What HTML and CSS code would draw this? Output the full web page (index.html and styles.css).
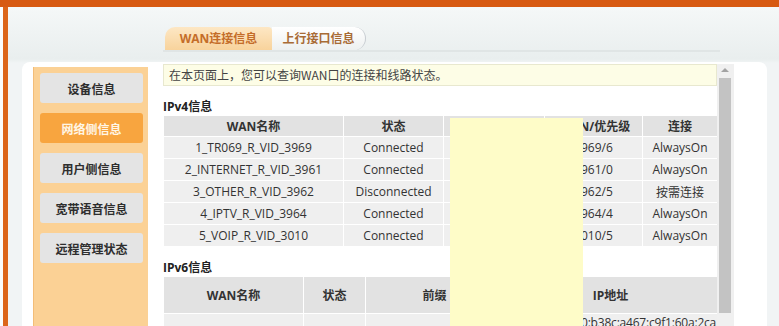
FILE: index.html
```html
<!DOCTYPE html>
<html lang="zh-CN">
<head>
<meta charset="utf-8">
<title>WAN连接信息</title>
<link rel="stylesheet" href="styles.css">
</head>
<body>
<div class="frame">
  <div class="top">
    <div class="tabs">
      <div class="tab active">WAN连接信息</div>
      <div class="tab">上行接口信息</div>
    </div>
  </div>
  <div class="card">
    <nav class="side">
      <div class="item">设备信息</div>
      <div class="item on">网络侧信息</div>
      <div class="item">用户侧信息</div>
      <div class="item">宽带语音信息</div>
      <div class="item">远程管理状态</div>
    </nav>
    <div class="main">
      <div class="content">
        <div class="notice">在本页面上，您可以查询WAN口的连接和线路状态。</div>
        <div class="label">IPv4信息</div>
        <table class="grid v4">
          <colgroup><col class="c1"><col class="c2"><col class="c3"><col class="c4"><col class="c5"></colgroup>
          <tr><th>WAN名称</th><th>状态</th><th>IP地址</th><th>VLAN/优先级</th><th>连接</th></tr>
          <tr><td>1_TR069_R_VID_3969</td><td>Connected</td><td></td><td>3969/6</td><td>AlwaysOn</td></tr>
          <tr><td>2_INTERNET_R_VID_3961</td><td>Connected</td><td></td><td>3961/0</td><td>AlwaysOn</td></tr>
          <tr><td>3_OTHER_R_VID_3962</td><td>Disconnected</td><td></td><td>3962/5</td><td>按需连接</td></tr>
          <tr><td>4_IPTV_R_VID_3964</td><td>Connected</td><td></td><td>3964/4</td><td>AlwaysOn</td></tr>
          <tr><td>5_VOIP_R_VID_3010</td><td>Connected</td><td></td><td>3010/5</td><td>AlwaysOn</td></tr>
        </table>
        <div class="label">IPv6信息</div>
        <table class="grid v6">
          <colgroup><col class="d1"><col class="d2"><col class="d3"><col class="d4"></colgroup>
          <tr><th>WAN名称</th><th>状态</th><th>前缀</th><th>IP地址</th></tr>
          <tr><td></td><td></td><td></td><td class="ip">0:b38c:a467:c9f1:60a:2ca</td></tr>
        </table>
        <div class="mask"></div>
      </div>
      <div class="scroll"><div class="arrow"></div><div class="thumb"></div></div>
    </div>
  </div>
</div>
</body>
</html>
```
FILE: styles.css
```css
html, body {
  margin: 0;
  height: 100%;
}
body {
  background: #fbfcfc;
  border-top: 7px solid #d75a12;
  box-sizing: border-box;
  overflow: hidden;
  font-family: "Open Sans", "Noto Sans CJK SC", sans-serif;
  font-size: 12px;
  color: #333;
}
.frame {
  margin-left: 3px;
  height: 319px;
  border-left: 5px solid #dc6519;
  background: linear-gradient(#f5f8f8, #e9eeee 52px, #f1f4f5 56px);
  display: flex;
  flex-direction: column;
}
.top {
  height: 55px;
  flex: none;
  box-sizing: border-box;
  padding: 20px 0 0 155px;
}
.tabs {
  display: flex;
  width: 557px;
  height: 23px;
  border-bottom: 2px solid #e0e5e5;
}
.tab {
  line-height: 23px;
  font-weight: bold;
  text-align: center;
  font-family: "Open Sans", "Noto Sans CJK SC", sans-serif;
}
.tab.active {
  margin-left: 2px;
  width: 107px;
  background: linear-gradient(#fde7c4, #f8d39c);
  border-radius: 10px 4px 0 0;
  color: #c46d29;
}
.tab + .tab {
  width: 93px;
  background: linear-gradient(#ffffff, #edf0f0);
  border-right: 1px solid #c7ccd1;
  border-radius: 0 12px 12px 0;
  color: #a86b35;
}
.card {
  flex: 1;
  margin-left: 14px;
  width: 745px;
  background: #fff;
  border-radius: 8px 8px 0 0;
  display: flex;
  align-items: stretch;
  padding-top: 2px;
  box-sizing: border-box;
  min-height: 0;
}
.side {
  margin: 3px 0 0 11px;
  width: 115px;
  box-sizing: border-box;
  padding: 6px 5px 0 6px;
  background: #fbd195;
  border-left: 1px solid #f3bd78;
}
.item {
  height: 30px;
  margin-bottom: 10px;
  background: #e4e4e4;
  border-radius: 3px;
  display: flex;
  align-items: center;
  justify-content: center;
  font-family: "Noto Sans CJK SC", sans-serif;
  font-weight: bold;
  font-size: 12px;
  color: #2e2e2e;
}
.item.on {
  background: #f8a53f;
  color: #fff6e6;
}
.main {
  margin-left: 15px;
  display: flex;
  min-height: 0;
}
.content {
  width: 554px;
  position: relative;
  overflow: hidden;
}
.notice {
  height: 22px;
  box-sizing: border-box;
  border: 1px solid #e8e8cf;
  background: #fdfde6;
  padding-left: 5px;
  line-height: 20px;
  color: #444;
  font-family: "Noto Sans CJK SC", sans-serif;
}
.label {
  font-weight: bold;
  line-height: 16px;
  margin-top: 13px;
  color: #222;
}
.grid {
  border-collapse: collapse;
  table-layout: fixed;
  width: 554px;
}
.grid th, .grid td {
  border: 1px solid #fff;
  padding: 0;
  text-align: center;
  white-space: nowrap;
  color: #333;
}
.grid th {
  background: #e2e2e2;
  font-weight: bold;
}
.grid td {
  background: #efefef;
}
.v4 th { height: 20px; }
.v4 td { height: 21px; }
.c1 { width: 180px; }
.c2 { width: 100px; }
.c3 { width: 101px; }
.c4 { width: 98px; }
.c5 { width: 75px; }
.d1 { width: 140px; }
.d2 { width: 62px; }
.d3 { width: 138px; }
.d4 { width: 214px; }
.v6 th { height: 36px; }
.v6 td { height: 60px; }
.v6 td.ip {
  text-align: left;
  vertical-align: top;
  padding: 0 0 0 77px;
  letter-spacing: -0.2px;
  overflow: visible;
}
.mask {
  position: absolute;
  left: 287px;
  top: 54px;
  width: 133px;
  bottom: 0;
  background: #fefcc8;
}
.scroll {
  width: 17px;
  background: #f0f0f0;
  flex: none;
}
.arrow {
  width: 0;
  height: 0;
  margin: 4px 0 0 4px;
  border-left: 4px solid transparent;
  border-right: 4px solid transparent;
  border-bottom: 4px solid #a3a3a3;
}
.thumb {
  margin: 6px 0 0 2px;
  width: 12px;
  height: 235px;
  background: #c3c3c3;
}
```
